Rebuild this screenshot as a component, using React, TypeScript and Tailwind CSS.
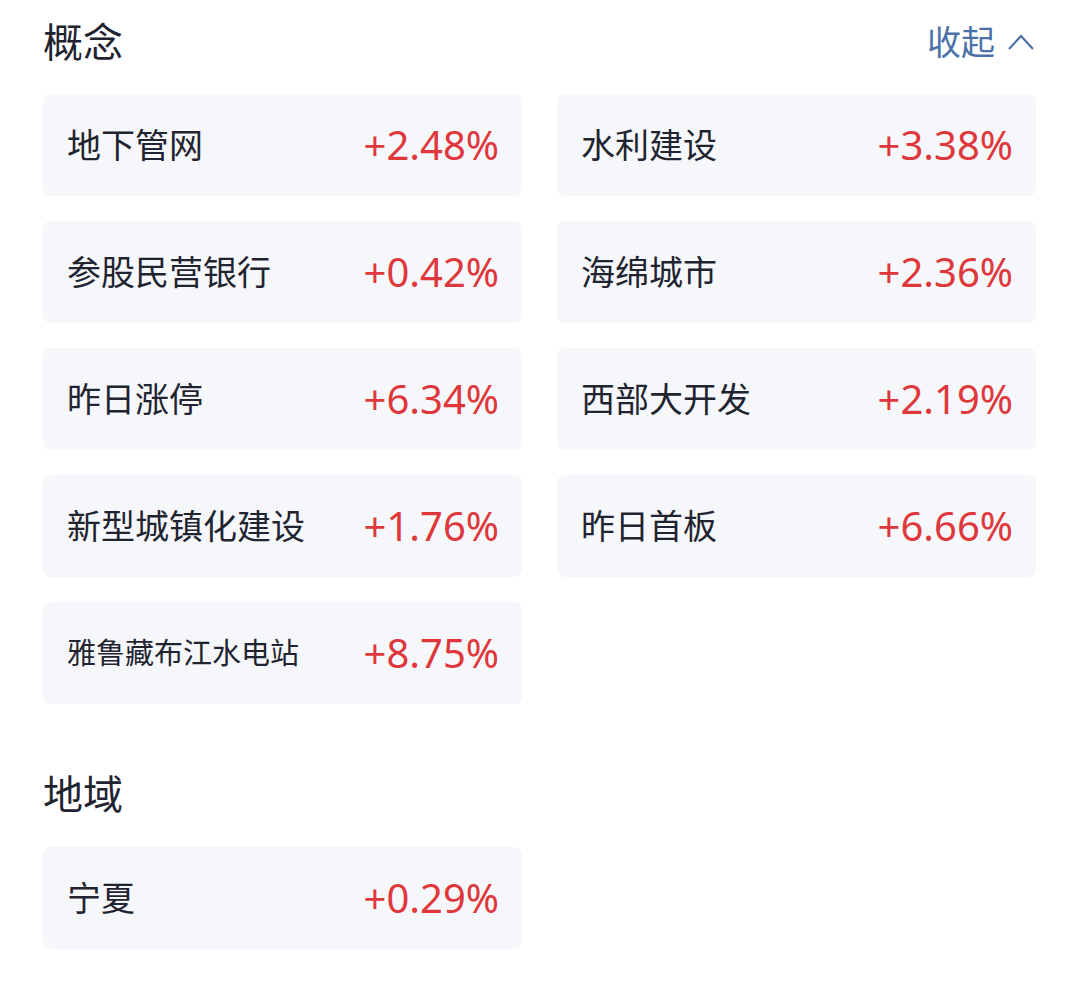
const concepts = [
  { name: "地下管网", pct: "+2.48%" },
  { name: "水利建设", pct: "+3.38%" },
  { name: "参股民营银行", pct: "+0.42%" },
  { name: "海绵城市", pct: "+2.36%" },
  { name: "昨日涨停", pct: "+6.34%" },
  { name: "西部大开发", pct: "+2.19%" },
  { name: "新型城镇化建设", pct: "+1.76%" },
  { name: "昨日首板", pct: "+6.66%" },
  { name: "雅鲁藏布江水电站", pct: "+8.75%", small: true },
];

const regions = [{ name: "宁夏", pct: "+0.29%" }];

function Card({ name, pct, small }: { name: string; pct: string; small?: boolean }) {
  return (
    <div className="flex h-[102px] items-center justify-between rounded-lg bg-[#f6f7fa] pl-6 pr-[23px]">
      <span className={`${small ? "text-[29px]" : "text-[34px]"} text-[#1f2430]`}>{name}</span>
      <span className="text-[40px] text-[#de383c]">{pct}</span>
    </div>
  );
}

export default function App() {
  return (
    <div
      className="min-h-[982px] w-[1076px] bg-white pl-[43px] pr-[40px] pt-[12px]"
      style={{ fontFamily: '"Noto Sans", "Noto Sans CJK SC", sans-serif' }}
    >
      <div className="flex h-[60px] items-center justify-between">
        <h2 className="text-[40px] leading-none text-[#1f2430]">概念</h2>
        <button className="mr-[1px] flex items-center gap-3 text-[34px] leading-none text-[#4a72a8]">
          收起
          <svg width="28" height="18" viewBox="0 0 28 18" fill="none" stroke="currentColor" strokeWidth="2.2">
            <polyline points="2,16 14,3 26,16" />
          </svg>
        </button>
      </div>
      <div className="mt-[22px] grid grid-cols-2 gap-x-[35px] gap-y-[25px]">
        {concepts.map((c) => (
          <Card key={c.name} {...c} />
        ))}
      </div>

      <h2 className="mt-[60px] flex h-[60px] items-center text-[40px] leading-none text-[#1f2430]">地域</h2>
      <div className="mt-[23px] grid grid-cols-2 gap-x-[35px]">
        {regions.map((c) => (
          <Card key={c.name} {...c} />
        ))}
      </div>
    </div>
  );
}
